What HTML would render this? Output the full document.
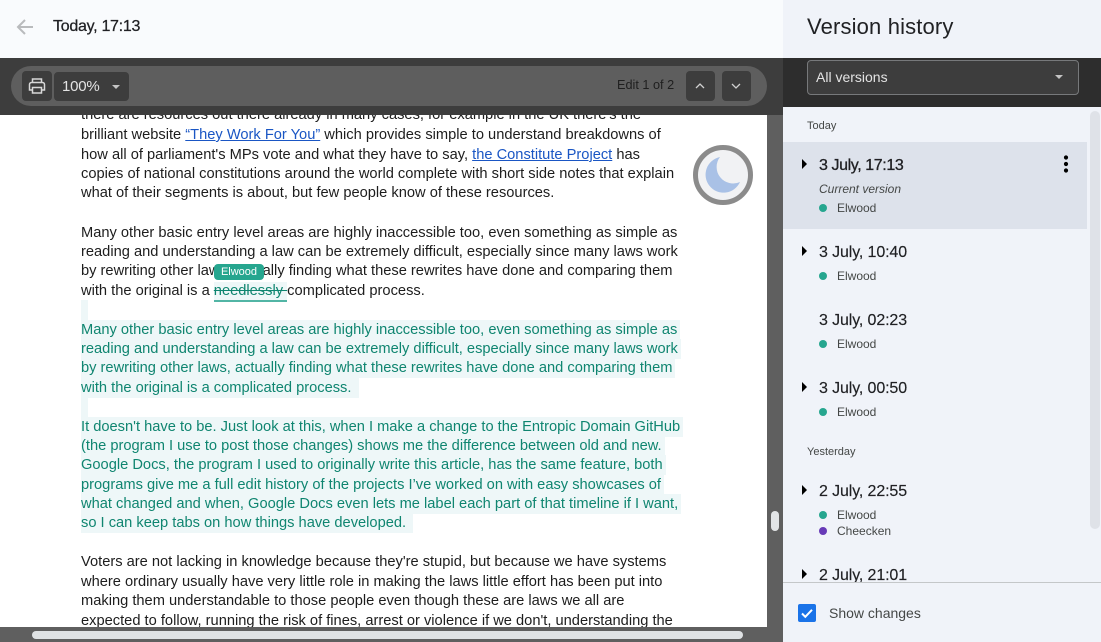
<!DOCTYPE html>
<html><head><meta charset="utf-8">
<style>
html,body{margin:0;padding:0;width:1101px;height:642px;overflow:hidden;background:#fff}
body{position:relative;font-family:"Liberation Sans",sans-serif}
.a{position:absolute}
.l{position:absolute;left:81px;font-size:14.67px;line-height:19px;height:19px;white-space:nowrap;color:#1d1d1d}
.g{display:block;width:fit-content;height:20px;line-height:21px;margin-top:-1px;color:#0f8570;background:#eef7f8;padding-right:3px}
.l a{color:#1a56c4;text-decoration:underline}
.t{position:absolute;left:819px;font-size:16px;line-height:20px;color:#202124;white-space:nowrap;letter-spacing:-.12px;-webkit-text-stroke:.15px #202124}
.n{position:absolute;left:837px;font-size:12px;line-height:16px;color:#444746;white-space:nowrap}
.d{position:absolute;left:819px;width:8px;height:8px;border-radius:50%;background:#26a68f}
.tri{position:absolute;left:802px;width:0;height:0;border-left:5px solid #000;border-top:5px solid transparent;border-bottom:5px solid transparent}
.h{position:absolute;left:807px;font-size:11px;line-height:14px;color:#444746}
</style></head><body>
<div class="a" style="left:0;top:0;width:1101px;height:58px;background:#f9fbfd"></div>
<svg class="a" style="left:15px;top:17px" width="20" height="20" viewBox="0 0 20 20"><path d="M18 10H3M10 3L3 10l7 7" fill="none" stroke="#b9bbbd" stroke-width="2"/></svg>
<div class="a" style="left:53px;top:17px;font-size:16px;line-height:20px;letter-spacing:-.28px;color:#202124;-webkit-text-stroke:.25px #202124">Today, 17:13</div>

<div class="l" style="top:106px">there are resources out there already in many cases, for example in the UK there's the</div>
<div class="l" style="top:126px">brilliant website <a>“They Work For You”</a> which provides simple to understand breakdowns of</div>
<div class="l" style="top:146px">how all of parliament's MPs vote and what they have to say, <a>the Constitute Project</a> has</div>
<div class="l" style="top:165px">copies of national constitutions around the world complete with short side notes that explain</div>
<div class="l" style="top:184px">what of their segments is about, but few people know of these resources.</div>

<div class="l" style="top:224px">Many other basic entry level areas are highly inaccessible too, even something as simple as</div>
<div class="l" style="top:243px">reading and understanding a law can be extremely difficult, especially since many laws work</div>
<div class="l" style="top:262px">by rewriting other laws, actually finding what these rewrites have done and comparing them</div>
<div class="a" style="left:214px;top:282px;width:73px;height:20px;background:#eef7f8;border-bottom:2px solid #52b5a5;box-sizing:border-box"></div>
<div class="l" style="top:282px">with the original is a <span style="color:#0f8570;text-decoration:line-through">needlessly </span>complicated process.</div>
<div class="a" style="left:214px;top:264px;width:50px;height:16px;border-radius:4px;background:#26a68f;color:#fff;font-size:11px;line-height:16px;text-align:center">Elwood</div>

<div class="a" style="left:81px;top:300px;width:7px;height:20px;background:#eef7f8"></div>
<div class="l" style="top:321px"><span class="g">Many other basic entry level areas are highly inaccessible too, even something as simple as</span></div>
<div class="l" style="top:340px"><span class="g">reading and understanding a law can be extremely difficult, especially since many laws work</span></div>
<div class="l" style="top:359px"><span class="g">by rewriting other laws, actually finding what these rewrites have done and comparing them</span></div>
<div class="l" style="top:379px"><span class="g">with the original is a complicated process.&nbsp; </span></div>

<div class="a" style="left:81px;top:398px;width:7px;height:19px;background:#eef7f8"></div>
<div class="l" style="top:418px"><span class="g">It doesn't have to be. Just look at this, when I make a change to the Entropic Domain GitHub</span></div>
<div class="l" style="top:437px"><span class="g">(the program I use to post those changes) shows me the difference between old and new.</span></div>
<div class="l" style="top:456px"><span class="g">Google Docs, the program I used to originally write this article, has the same feature, both</span></div>
<div class="l" style="top:476px"><span class="g">programs give me a full edit history of the projects I’ve worked on with easy showcases of</span></div>
<div class="l" style="top:495px"><span class="g">what changed and when, Google Docs even lets me label each part of that timeline if I want,</span></div>
<div class="l" style="top:514px"><span class="g">so I can keep tabs on how things have developed.&nbsp;</span></div>

<div class="l" style="top:553px">Voters are not lacking in knowledge because they're stupid, but because we have systems</div>
<div class="l" style="top:573px">where ordinary usually have very little role in making the laws little effort has been put into</div>
<div class="l" style="top:592px">making them understandable to those people even though these are laws we all are</div>
<div class="l" style="top:612px">expected to follow, running the risk of fines, arrest or violence if we don't, understanding the</div>

<svg class="a" style="left:692px;top:144px" width="62" height="62" viewBox="0 0 62 62"><circle cx="31" cy="31" r="27.5" fill="#f1f2f4" stroke="#8b8b8b" stroke-width="5"/><path d="M28 13A18 18 0 1 0 48 38A16.5 16.5 0 0 1 28 13Z" fill="#a9c1e6"/></svg>

<div class="a" style="left:0;top:58px;width:783px;height:57px;background:#3d3d3d"></div>
<div class="a" style="left:11px;top:66px;width:756px;height:40px;border-radius:20px;background:#5e5e5e"></div>
<div class="a" style="left:22px;top:71px;width:30px;height:30px;border-radius:4px;background:#3d3d3d"></div>
<svg class="a" style="left:27px;top:76px" width="20" height="20" viewBox="0 0 20 20"><path d="M5.5 6.5V3h9v3.5M5.5 14H2.5V8.5a2 2 0 0 1 2-2h11a2 2 0 0 1 2 2V14h-3M5.5 11.5h9V17h-9z" fill="none" stroke="#d8d8d8" stroke-width="1.5"/></svg>
<div class="a" style="left:54px;top:72px;width:75px;height:29px;border-radius:4px;background:#3d3d3d"></div>
<div class="a" style="left:62px;top:77px;font-size:15px;letter-spacing:-.2px;line-height:20px;color:#e3e3e3">100%</div>
<div class="a" style="left:112px;top:85px;border-left:4px solid transparent;border-right:4px solid transparent;border-top:4px solid #c4c4c4"></div>
<div class="a" style="left:617px;top:77px;font-size:12.7px;line-height:17px;color:#1f1f1f">Edit 1 of 2</div>
<div class="a" style="left:686px;top:71px;width:29px;height:30px;border-radius:4px;background:#3d3d3d"></div>
<div class="a" style="left:722px;top:71px;width:29px;height:30px;border-radius:4px;background:#3d3d3d"></div>
<svg class="a" style="left:686px;top:71px" width="65" height="30" viewBox="0 0 65 30"><path d="M10 17l4-4 4 4M46 13l4 4 4-4" fill="none" stroke="#d0d0d0" stroke-width="1.3"/></svg>

<div class="a" style="left:767px;top:115px;width:16px;height:527px;background:#5f5f5f"></div>
<div class="a" style="left:0;top:627px;width:783px;height:15px;background:#5f5f5f"></div>
<div class="a" style="left:32px;top:631px;width:711px;height:8px;border-radius:4px;background:#dfe2e4"></div>
<div class="a" style="left:771px;top:511px;width:8px;height:20px;border-radius:4px;background:#e2e4e6"></div>

<div class="a" style="left:783px;top:0;width:318px;height:642px;background:#f0f3f9"></div>
<div class="a" style="left:807px;top:13px;font-size:22px;line-height:28px;letter-spacing:.15px;color:#202124">Version history</div>
<div class="a" style="left:783px;top:58px;width:318px;height:49px;background:#2d2d2d"></div>
<div class="a" style="left:807px;top:60px;width:272px;height:35px;box-sizing:border-box;border:1px solid #77797b;border-radius:4px;background:#3d3d3d"></div>
<div class="a" style="left:816px;top:68px;font-size:14px;line-height:18px;color:#e3e3e3">All versions</div>
<div class="a" style="left:1055px;top:75px;border-left:4px solid transparent;border-right:4px solid transparent;border-top:4px solid #c4c4c4"></div>
<div class="a" style="left:1090px;top:111px;width:10px;height:418px;border-radius:5px;background:#dfe2e8"></div>

<div class="h" style="top:119px">Today</div>
<div class="a" style="left:783px;top:142px;width:304px;height:87px;background:#dde2eb"></div>
<div class="tri" style="top:159px"></div>
<div class="t" style="top:156px;letter-spacing:-.4px;-webkit-text-stroke:.3px #202124">3 July, 17:13</div>
<svg class="a" style="left:1062px;top:155px" width="8" height="18" viewBox="0 0 8 18"><circle cx="4" cy="2.5" r="2.1"/><circle cx="4" cy="9" r="2.1"/><circle cx="4" cy="15.5" r="2.1"/></svg>
<div class="n" style="left:819px;top:181px;font-style:italic">Current version</div>
<div class="d" style="top:204px"></div><div class="n" style="top:200px">Elwood</div>

<div class="tri" style="top:246px"></div>
<div class="t" style="top:243px">3 July, 10:40</div>
<div class="d" style="top:272px"></div><div class="n" style="top:268px">Elwood</div>

<div class="t" style="top:311px">3 July, 02:23</div>
<div class="d" style="top:340px"></div><div class="n" style="top:336px">Elwood</div>

<div class="tri" style="top:382px"></div>
<div class="t" style="top:379px">3 July, 00:50</div>
<div class="d" style="top:408px"></div><div class="n" style="top:404px">Elwood</div>

<div class="h" style="top:445px">Yesterday</div>
<div class="tri" style="top:485px"></div>
<div class="t" style="top:482px">2 July, 22:55</div>
<div class="d" style="top:511px"></div><div class="n" style="top:507px">Elwood</div>
<div class="d" style="top:527px;background:#673ab7"></div><div class="n" style="top:523px">Cheecken</div>
<div class="tri" style="top:569px"></div>
<div class="t" style="top:566px">2 July, 21:01</div>

<div class="a" style="left:783px;top:582px;width:318px;height:60px;background:#f0f3f9;border-top:1px solid #c4c7c9;box-sizing:border-box"></div>
<div class="a" style="left:798px;top:604px;width:18px;height:18px;border-radius:2px;background:#1a73e8"></div>
<svg class="a" style="left:798px;top:604px" width="18" height="18" viewBox="0 0 18 18"><path d="M4 9.5l3.3 3.3L14 5.8" fill="none" stroke="#fff" stroke-width="2"/></svg>
<div class="a" style="left:829px;top:604px;font-size:14px;line-height:18px;color:#444746">Show changes</div>
</body></html>
